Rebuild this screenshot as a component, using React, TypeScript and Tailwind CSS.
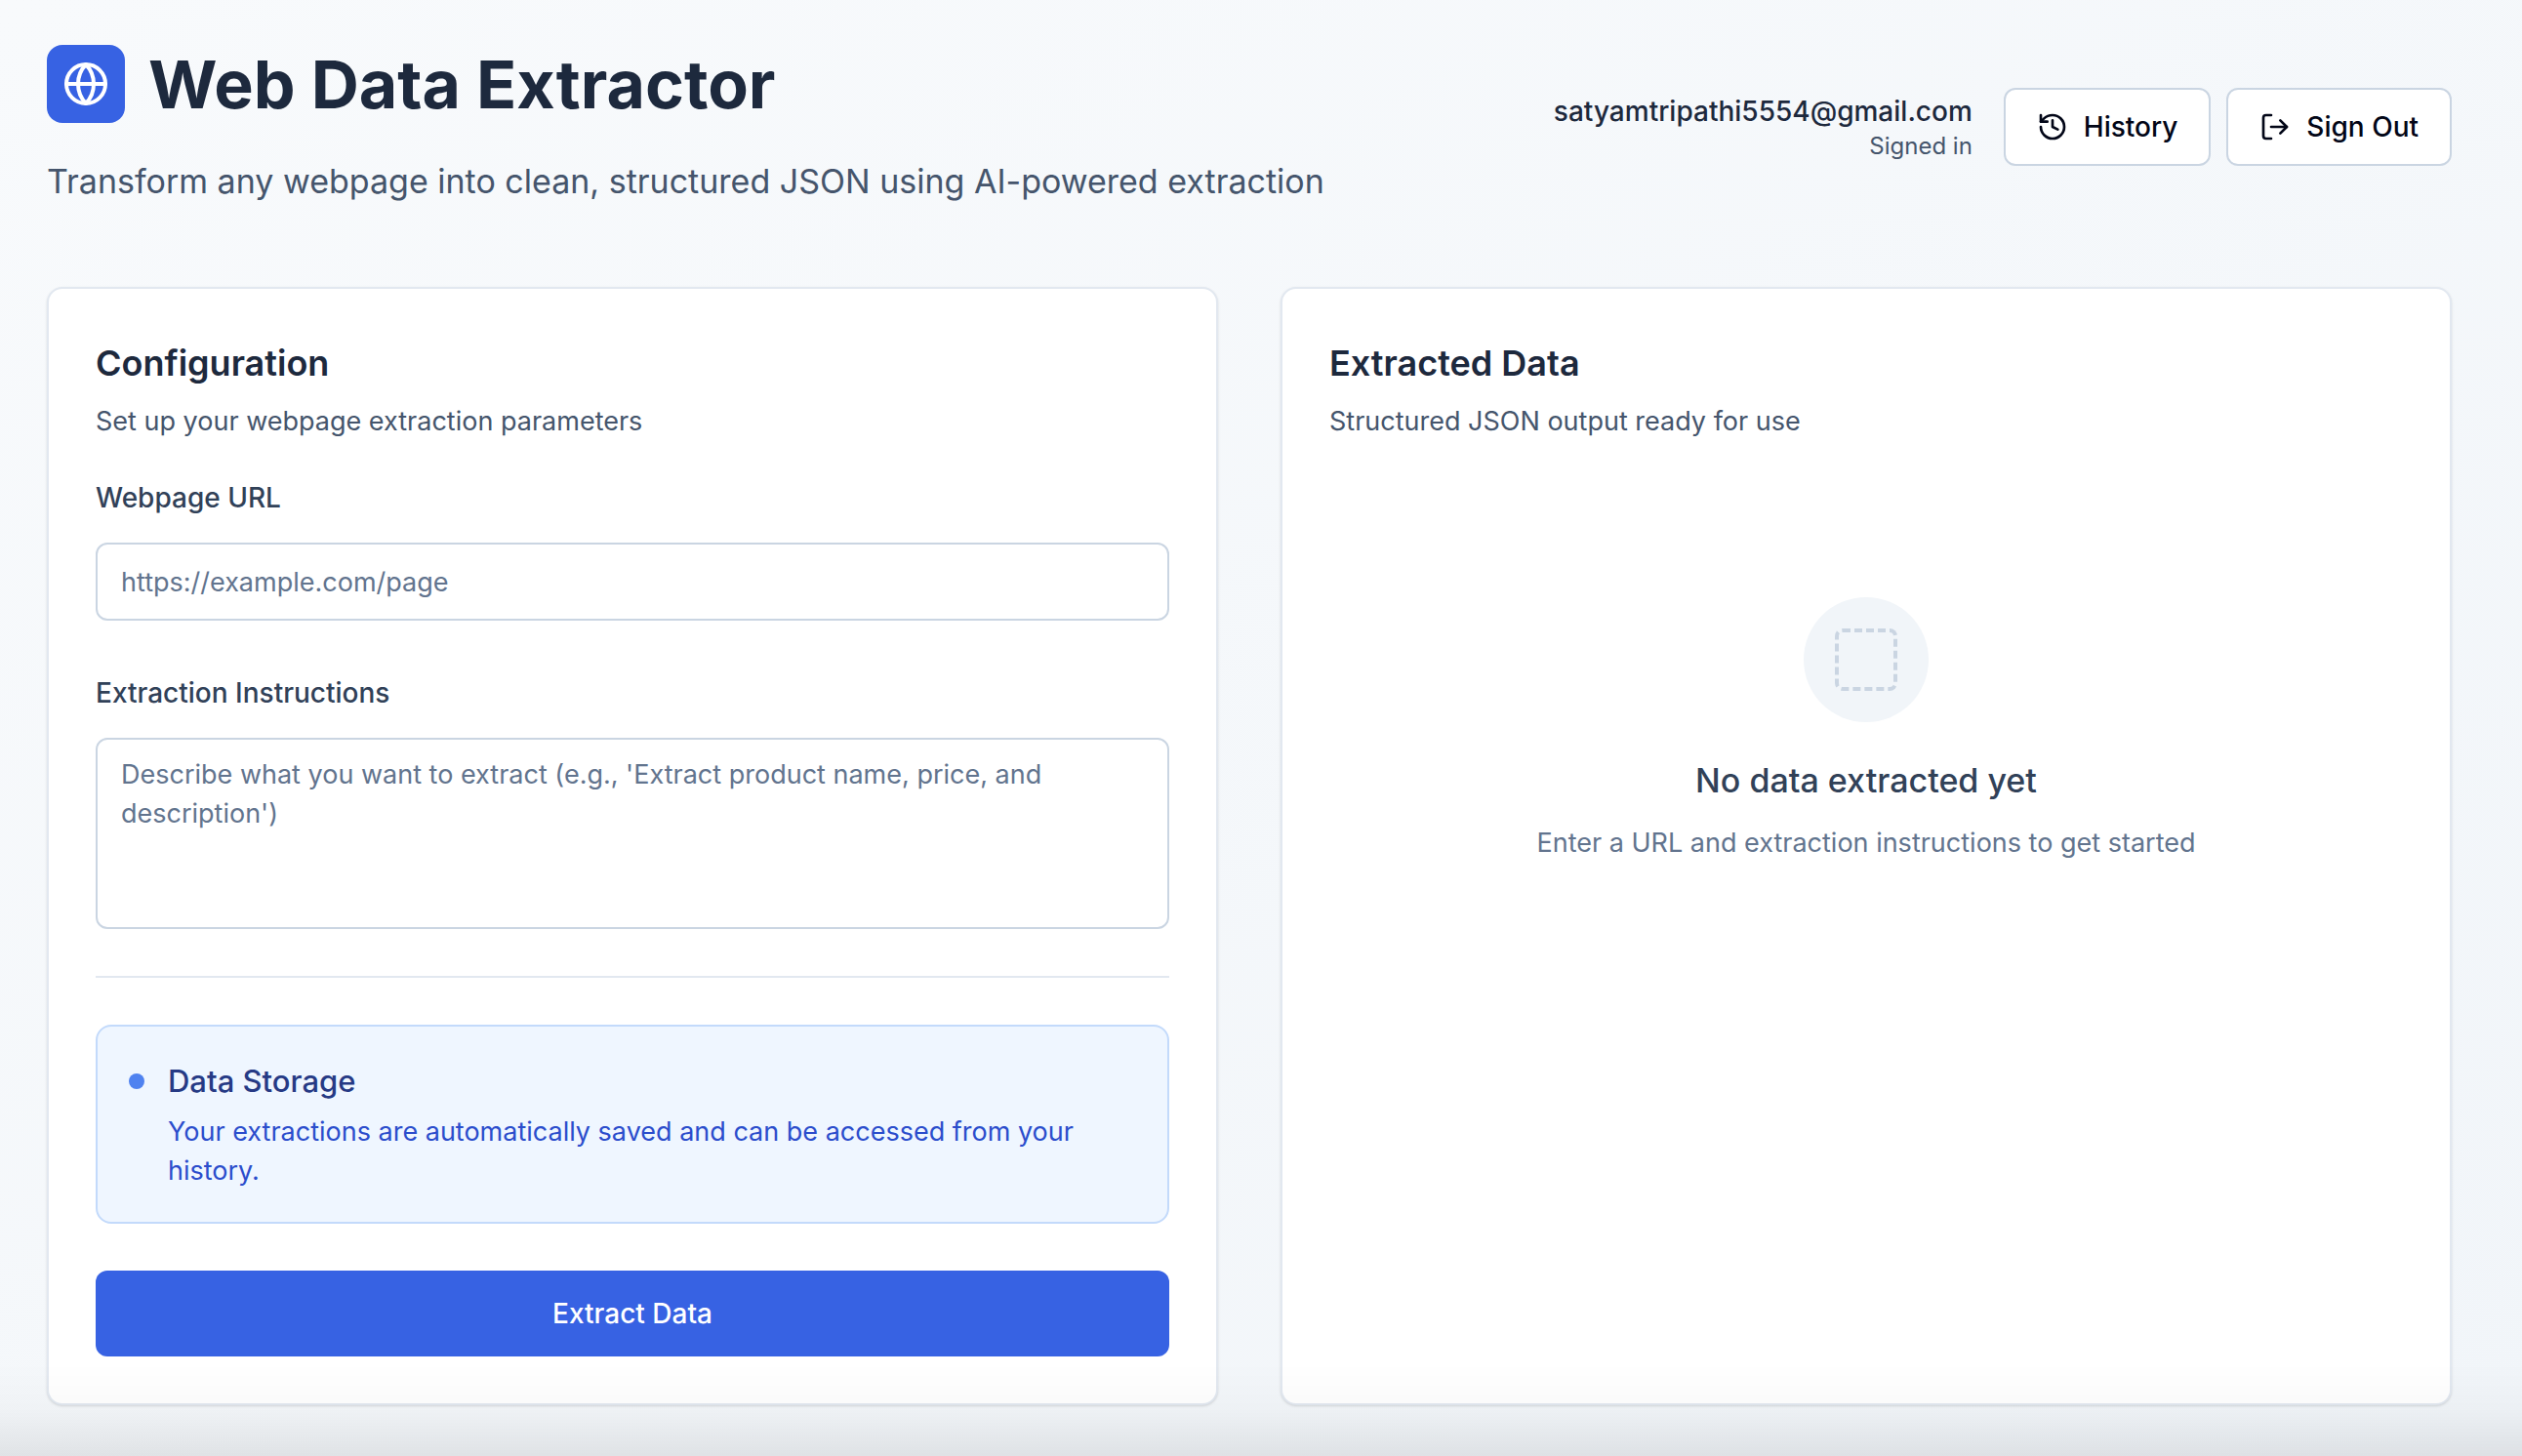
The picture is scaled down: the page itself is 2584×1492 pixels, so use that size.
import React, { useState } from 'react';
import { Globe, History, LogOut } from 'lucide-react';

interface CardProps {
  title: string;
  description: string;
  children: React.ReactNode;
}

interface OutlineButtonProps {
  icon: React.ReactNode;
  label: string;
}

const USER_EMAIL = 'satyamtripathi5554@gmail.com';

function OutlineButton({ icon, label }: OutlineButtonProps) {
  return (
    <button
      type="button"
      className="flex h-20 items-center gap-4 rounded-xl border-2 border-slate-300 bg-white px-8 text-[28px] font-medium text-[#020617] hover:bg-slate-50"
    >
      {icon}
      {label}
    </button>
  );
}

function Header() {
  return (
    <header className="flex items-center justify-between">
      <div>
        <div className="mb-8 flex items-center gap-6">
          <div className="rounded-2xl bg-[#3762e3] p-4">
            <Globe className="size-12 text-white" />
          </div>
          <h1 className="text-[68px] leading-[80px] font-bold text-slate-800">Web Data Extractor</h1>
        </div>
        <p className="text-[34px] leading-[56px] text-slate-600">
          Transform any webpage into clean, structured JSON using AI-powered extraction
        </p>
      </div>

      <div className="flex items-center gap-8">
        <div className="text-right">
          <p className="text-[28px] leading-10 font-medium text-slate-800">{USER_EMAIL}</p>
          <p className="text-2xl text-slate-600">Signed in</p>
        </div>
        <div className="flex items-center gap-4">
          <OutlineButton icon={<History className="size-8" />} label="History" />
          <OutlineButton icon={<LogOut className="size-8" />} label="Sign Out" />
        </div>
      </div>
    </header>
  );
}

function Card({ title, description, children }: CardProps) {
  return (
    <section className="rounded-2xl border-2 border-slate-200 bg-white p-12 shadow-sm">
      <h2 className="text-4xl leading-[56px] font-semibold text-slate-800">{title}</h2>
      <p className="mt-3 text-[27px] leading-10 text-slate-600">{description}</p>
      {children}
    </section>
  );
}

function ExtractionForm() {
  const [url, setUrl] = useState('');
  const [instructions, setInstructions] = useState('');

  return (
    <form onSubmit={(e) => e.preventDefault()}>
      <label htmlFor="url" className="mt-11 mb-8 block text-[28px] leading-7 font-medium text-slate-700">
        Webpage URL
      </label>
      <input
        id="url"
        type="url"
        value={url}
        onChange={(e) => setUrl(e.target.value)}
        placeholder="https://example.com/page"
        className="block h-20 w-full rounded-xl border-2 border-slate-300 bg-white px-6 text-[27px] text-slate-800 placeholder:text-slate-500"
      />

      <label htmlFor="instructions" className="mt-15 mb-8 block text-[28px] leading-7 font-medium text-slate-700">
        Extraction Instructions
      </label>
      <textarea
        id="instructions"
        rows={4}
        value={instructions}
        onChange={(e) => setInstructions(e.target.value)}
        placeholder="Describe what you want to extract (e.g., 'Extract product name, price, and description')"
        className="block w-full resize-none rounded-xl border-2 border-slate-300 bg-white px-6 py-4 text-[27px] leading-10 text-slate-800 placeholder:text-slate-500"
      />

      <hr className="my-12 border-t-2 border-slate-200" />

      {/* Storage notice */}
      <div className="flex items-start gap-6 rounded-2xl border-2 border-[#c3dafb] bg-[#eff6ff] p-8">
        <div className="mt-4 size-4 shrink-0 rounded-full bg-[#4f82f0]" />
        <div>
          <h3 className="text-[31px] leading-[48px] font-medium text-[#263a85]">Data Storage</h3>
          <p className="mt-2 text-[27px] leading-10 text-[#2b4dcc]">
            Your extractions are automatically saved and can be accessed from your history.
          </p>
        </div>
      </div>

      <button
        type="submit"
        className="mt-12 block h-22 w-full rounded-xl bg-[#3762e3] text-[28px] font-medium text-white hover:bg-blue-700"
      >
        Extract Data
      </button>
    </form>
  );
}

function EmptyState() {
  return (
    <div className="flex flex-col items-center pt-40 text-center">
      <div className="mb-8 flex size-32 items-center justify-center rounded-full bg-[#f1f5f9]">
        <div className="size-16 rounded-lg border-4 border-dashed border-slate-300" />
      </div>
      <h3 className="mb-4 text-[34px] leading-[56px] font-medium text-slate-700">No data extracted yet</h3>
      <p className="text-[27px] leading-10 text-slate-500">Enter a URL and extraction instructions to get started</p>
    </div>
  );
}

export default function App() {
  return (
    <div className="min-h-screen bg-linear-to-br/srgb from-[#f8fafc] to-[#f1f5f9] pt-[46px] pr-18 pb-[52px] pl-12 font-['Inter',sans-serif]">
      <Header />

      <main className="mt-20 grid grid-cols-2 gap-16">
        <Card title="Configuration" description="Set up your webpage extraction parameters">
          <ExtractionForm />
        </Card>
        <Card title="Extracted Data" description="Structured JSON output ready for use">
          <EmptyState />
        </Card>
      </main>

      {/* Soft shade along the bottom edge of the window */}
      <div className="pointer-events-none fixed inset-x-0 bottom-0 h-24 bg-linear-to-b from-transparent via-black/2 to-black/8" />
    </div>
  );
}
